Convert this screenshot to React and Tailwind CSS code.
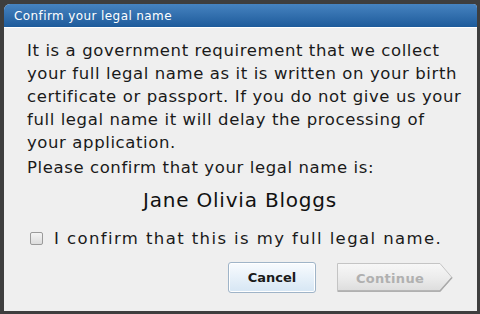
import React from "react";

function ContinueButton() {
  return (
    <button disabled className="relative w-[118px] h-[31px] ml-[20px] cursor-default">
      <svg className="absolute inset-0" width="118" height="31" viewBox="0 0 118 31">
        <defs>
          <linearGradient id="cg" x1="0" y1="0" x2="0" y2="1">
            <stop offset="0" stopColor="#f7f7f7" />
            <stop offset="0.5" stopColor="#ececec" />
            <stop offset="1" stopColor="#dcdcdc" />
          </linearGradient>
        </defs>
        <path d="M1.5 1.5 H104 L116 15.5 L104 29.5 H1.5 Z" fill="url(#cg)" stroke="#c4c4c4" strokeWidth="1" />
        <path d="M2 29 H104 L116 15.5" fill="none" stroke="#a9a9a9" strokeWidth="1.5" />
      </svg>
      <span className="relative text-[13px] font-bold text-[#b0b0b0] pr-[10px] tracking-[0.3px]">Continue</span>
    </button>
  );
}

export default function App() {
  return (
    <div className="w-[480px] h-[314px] bg-[#3e3e3e] pl-[4px] pt-[4px] pr-[3px] pb-[3px] overflow-hidden" style={{ fontFamily: '"DejaVu Sans", Verdana, sans-serif' }}>
      <div className="h-full flex flex-col rounded-tl-[6px] rounded-tr-[4px] overflow-hidden bg-[#efefef]">
        <div className="h-[23px] flex items-center pl-[10px] bg-gradient-to-b from-[#4683c0] to-[#1d5b9b] text-white text-[12px] tracking-[0.4px]">
          Confirm your legal name
        </div>
        <div className="flex-1 border-t border-white pl-[23px] pr-[20px] pt-[11px] text-[#1a1a1a] text-[16.5px] leading-[23px] tracking-[0.6px] whitespace-nowrap">
          <p>
            It is a government requirement that we collect<br />
            your full legal name as it is written on your birth<br />
            certificate or passport. If you do not give us your<br />
            full legal name it will delay the processing of<br />
            your application.
          </p>
          <p className="mt-[2px]">Please confirm that your legal name is:</p>
          <div className="text-center text-[20px] leading-[24px] tracking-[0.8px] mt-[9px] pr-[4px] text-[#111]">Jane Olivia Bloggs</div>
          <label className="flex items-center mt-[15px] ml-[3px] tracking-[1.4px]">
            <span className="w-[13px] h-[13px] border border-[#9a9a9a] rounded-[2px] bg-gradient-to-b from-[#f4f4f4] to-[#dcdcdc] mr-[11px] shrink-0" />
            I confirm that this is my full legal name.
          </label>
          <div className="flex justify-end mt-[12px] pr-[3px] tracking-normal">
            <button className="w-[88px] h-[31px] rounded-[3px] border border-[#9fb4c8] bg-gradient-to-b from-[#f8fbfe] to-[#d6e6f4] text-[13px] font-bold text-[#1a1a1a] shadow-[inset_0_0_0_1px_#ffffff]">
              Cancel
            </button>
            <ContinueButton />
          </div>
        </div>
      </div>
    </div>
  );
}
